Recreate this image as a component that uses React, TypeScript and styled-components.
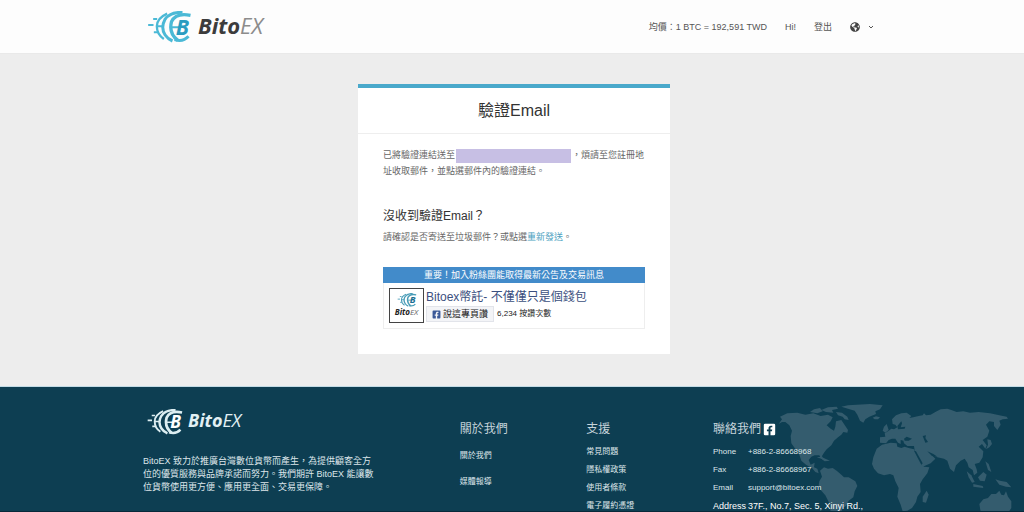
import React from "react";
import styled, { createGlobalStyle } from "styled-components";
import { FaFacebookSquare, FaGlobeAmericas } from "react-icons/fa";

const GlobalStyle = createGlobalStyle`
  *, *::before, *::after { box-sizing: border-box; }
  body {
    margin: 0;
    background: #ededed;
    font-family: "Liberation Sans", "Noto Sans CJK TC", sans-serif;
    font-size: 9px;
    line-height: 16px;
    color: #666;
  }
  h1, h2, h3, p, ul, dl, dd { margin: 0; padding: 0; font-weight: 400; }
  ul { list-style: none; }
  a { color: inherit; text-decoration: none; }
  button { font-family: inherit; cursor: pointer; }
`;

const Page = styled.div`
  display: flex;
  flex-direction: column;
  height: 100vh;
`;

const Container = styled.div`
  width: 100%;
  max-width: 760px;
  margin: 0 auto;
  padding: 0 18px 0 15px;
`;

const Header = styled.header`
  background: #fdfdfd;
  border-bottom: 1px solid #e9e9e9;
`;

const HeaderRow = styled(Container)`
  display: flex;
  align-items: center;
  justify-content: space-between;
  height: 53px;
`;

const Nav = styled.nav`
  display: flex;
  align-items: center;
  gap: 18px;
  color: #555;
`;

const LanguageButton = styled.button`
  display: flex;
  align-items: center;
  gap: 8px;
  padding: 0;
  border: 0;
  background: none;
  color: #444;
`;

const Brand = styled.a<{ $small?: boolean }>`
  display: flex;
  align-items: center;
  gap: ${(p) => (p.$small ? 5 : 6)}px;
  font-family: "Open Sans", sans-serif;
  font-style: italic;
  font-size: ${(p) => (p.$small ? 18 : 22)}px;
  line-height: 30px;
`;

const BrandName = styled.span`
  padding-bottom: 4px;
`;

const BrandBold = styled.span<{ $color: string }>`
  font-weight: 700;
  color: ${(p) => p.$color};
`;

const BrandLight = styled.span<{ $color: string }>`
  font-weight: 400;
  color: ${(p) => p.$color};
`;

const Main = styled.main`
  flex: none;
  padding: 30px 8px 32px 12px;
`;

const Card = styled.section`
  width: 100%;
  max-width: 312px;
  margin: 0 auto;
  background: #fff;
  border-top: 4px solid #4aa9cb;
`;

const CardTitle = styled.h1`
  padding: 12px 0;
  border-bottom: 1px solid #eee;
  font-size: 16px;
  line-height: 21px;
  text-align: center;
  color: #333;
`;

const CardBody = styled.div`
  padding: 13px 25px 25px;
`;

const Redacted = styled.span`
  display: inline-block;
  width: 115px;
  height: 14px;
  margin: 0 1px;
  vertical-align: middle;
  background: #c7bfe4;
`;

const SubTitle = styled.h2`
  margin-top: 29px;
  font-size: 12px;
  line-height: 16px;
  color: #333;
`;

const Hint = styled.p`
  margin-top: 5px;
`;

const ResendLink = styled.a`
  color: #4a9fc0;
`;

const FanBox = styled.aside`
  margin-top: 22px;
`;

const FanBanner = styled.p`
  background: #428bca;
  color: #fff;
  text-align: center;
`;

const FanContent = styled.div`
  display: flex;
  gap: 2px;
  padding: 5px;
  border: 1px solid #eee;
  border-top: 0;
`;

const FanLogo = styled.div`
  display: flex;
  flex-direction: column;
  align-items: center;
  width: 35px;
  height: 35px;
  padding-top: 4px;
  border: 1px solid #444;
  font-family: "Open Sans", sans-serif;
  font-style: italic;
  font-size: 8px;
  line-height: 10px;
`;

const FanName = styled.a`
  display: block;
  font-size: 12px;
  line-height: 18px;
  color: #3b5080;
`;

const LikeRow = styled.div`
  display: flex;
  align-items: center;
  gap: 3px;
  font-size: 8px;
  color: #222;
`;

const LikeButton = styled.button`
  display: flex;
  align-items: center;
  gap: 2px;
  height: 16px;
  padding: 0 5px;
  border: 1px solid #e2e4ea;
  background: #f3f4f7;
  color: #222;
  font-size: 9px;
  line-height: 14px;
`;

const Footer = styled.footer`
  position: relative;
  flex: 1;
  min-height: 0;
  overflow: hidden;
  border-top: 1px solid #c3dbe5;
  border-bottom: 1px solid #08293a;
  background: #0d3e52;
  color: #dde6ea;
`;

const MapArt = styled.svg`
  position: absolute;
  top: 0;
  right: 0;
  width: 324px;
  height: 125px;
`;

const FooterGrid = styled(Container)`
  position: relative;
  display: grid;
  grid-template-columns: 5fr 2fr 2fr 3fr;
  padding: 0;
`;

const About = styled.div`
  min-width: 0;
  padding: 18px 0 0 11px;
`;

const FooterBrand = styled(Brand)`
  padding-left: 4px;
`;

const AboutText = styled.p`
  margin-top: 16px;
  line-height: 13px;
  white-space: nowrap;
`;

const Column = styled.div`
  min-width: 0;
  padding: 33px 0 0 11px;
`;

const ColumnTitle = styled.h3`
  display: flex;
  align-items: center;
  gap: 2px;
  margin-bottom: 5px;
  font-size: 12px;
  line-height: 18px;
  color: #c5d3da;
`;

const SocialLink = styled.a`
  display: flex;
  color: #fff;
`;

const LinkList = styled.ul<{ $row: number }>`
  font-size: 8px;
  line-height: ${(p) => p.$row}px;
`;

const ContactList = styled.dl`
  display: grid;
  grid-template-columns: 35px 1fr;
  font-size: 8px;
  line-height: 18px;
  white-space: nowrap;
`;

const AddressTerm = styled.dt`
  font-size: 9px;
  color: #fff;
`;

const AddressValue = styled.dd`
  font-size: 9px;
  color: #fff;
`;

function LogoMark({ width, height, color, accent }: { width: number; height: number; color: string; accent: string }) {
  return (
    <svg width={width} height={height} viewBox="8 14 130 96" aria-hidden="true">
      <g fill="none" stroke={color}>
        <path d="M9 56H25M24 38H36M26 78H38" strokeWidth="6" />
        <path d="M66 22Q35 36 35 60Q35 84 56 98" strokeWidth="7" />
        <path d="M112 18Q74 17 59 40Q46 64 60 86Q68 98 82 104" strokeWidth="9" />
        <path d="M136 27Q92 18 79 46Q70 82 98 102" strokeWidth="10" />
        <path d="M88 100Q114 108 130 90" strokeWidth="9" />
        <path d="M36 60H54M80 63H104" strokeWidth="6" />
      </g>
      <text x="92" y="86" fontFamily="Open Sans, sans-serif" fontSize="64" fontWeight="700" fontStyle="italic" fill={accent}>
        B
      </text>
    </svg>
  );
}

const LAND = [
  "236,132 246,118 240,110 262,100 292,98 316,104 340,100 362,108 384,104 398,112 392,124 380,136 392,146 402,152 406,140 408,124 424,120 432,132 444,150 442,158 430,156 424,164 414,172 402,182 394,196 380,208 372,218 366,228 370,240 362,234 358,226 344,226 334,230 326,240 332,254 344,248 342,262 352,266 356,280 346,276 336,264 318,254 304,242 298,224 290,212 284,204 274,190 272,168 276,152 268,136 256,126 246,126",
  "330,96 342,88 360,84 368,94 352,100",
  "364,90 384,82 410,80 414,86 396,90 400,98 378,96",
  "408,96 426,98 442,110 446,120 434,118 428,110 414,106",
  "424,80 444,76 470,74 510,72 548,76 540,88 526,94 528,102 508,110 496,118 490,128 480,122 472,104 464,92 444,86",
  "518,113 528,109 540,112 534,118 524,118",
  "350,232 364,230 376,236 390,242 374,244 364,236",
  "360,272 372,262 384,266 398,264 410,272 424,284 432,292 446,292 466,304 472,318 464,334 460,352 446,362 438,378 428,384 424,396 392,396 388,370 376,346 362,330 356,316 358,304 366,290",
  "530,206 546,194 572,188 590,190 592,200 604,204 614,200 626,204 642,208 652,230 664,252 672,260 688,262 682,280 668,298 660,312 662,336 652,350 648,366 636,384 622,392 608,394 602,374 592,350 596,324 586,304 580,286 570,282 552,286 534,280 522,266 516,252 520,232",
  "680,332 686,344 678,368 668,366 668,350",
  "540,188 540,172 556,170 554,160 566,152 574,146 582,148 592,142 586,134 578,132 576,118 588,106 604,100 620,98 634,108 628,114 640,112 656,108 668,106 672,100 678,106 692,104 706,96 722,88 742,86 754,90 770,96 790,94 810,98 836,96 870,100 898,106 920,110 924,116 908,118 898,122 902,134 892,150 882,138 882,126 868,124 858,134 868,152 862,170 848,180 860,196 856,206 846,192 836,200 850,214 848,232 838,248 824,252 830,268 832,278 822,286 818,270 806,262 802,248 794,236 782,242 768,256 762,276 750,266 742,242 732,236 712,232 694,224 706,236 692,250 668,260 656,240 644,212 642,198 622,198 612,190 610,182 602,180 602,192 594,188 586,176 576,176 566,180 558,190",
  "552,140 560,132 566,150 556,158 548,152",
  "862,178 872,180 876,192 868,202 858,208 864,194",
  "856,244 866,252 874,276 864,270",
  "800,274 814,286 824,306 816,308 806,292",
  "834,292 850,276 860,284 854,304 840,302",
  "820,312 848,318 850,324 820,320",
  "886,298 900,302 920,306 934,322 918,320 898,314",
  "838,372 850,358 864,354 874,342 888,342 898,332 904,344 912,346 918,334 924,350 934,364 934,384 926,396 842,396",
];

function WorldMap() {
  return (
    <MapArt viewBox="0 21 972 375" aria-hidden="true">
      <g fill="#345c6e">
        {LAND.map((points) => (
          <polygon key={points} points={points} />
        ))}
      </g>
      <g fill="#0d3e52">
        <polygon points="612,176 620,170 636,176 626,182 614,182" />
        <polygon points="668,168 678,166 676,174 684,186 676,188" />
        <polygon points="642,212 648,214 668,250 664,254" />
        <polygon points="592,138 604,124 606,130 602,142 616,140 614,146 594,148" />
        <polygon points="682,214 700,222 712,230 696,228" />
      </g>
    </MapArt>
  );
}

const supportLinks = ["常見問題", "隱私權政策", "使用者條款", "電子履約憑證"];
const aboutLinks = ["關於我們", "媒體報導"];

function FooterLinks({ title, links, row }: { title: string; links: string[]; row: number }) {
  return (
    <Column>
      <ColumnTitle>{title}</ColumnTitle>
      <LinkList $row={row}>
        {links.map((label) => (
          <li key={label}>
            <a href="#">{label}</a>
          </li>
        ))}
      </LinkList>
    </Column>
  );
}

export default function App() {
  return (
    <Page>
      <GlobalStyle />
      <Header>
        <HeaderRow>
          <Brand href="#" aria-label="BitoEX">
            <LogoMark width={45} height={32} color="#4bb9d6" accent="#2a9cc0" />
            <BrandName>
              <BrandBold $color="#3c3c3c">Bito</BrandBold>
              <BrandLight $color="#8c8c8c">EX</BrandLight>
            </BrandName>
          </Brand>
          <Nav>
            <span>均價：1 BTC = 192,591 TWD</span>
            <span>Hi!</span>
            <a href="#">登出</a>
            <LanguageButton aria-label="Language">
              <FaGlobeAmericas size={10} />
              <svg width="6" height="4" viewBox="0 0 6 4" aria-hidden="true">
                <path d="M1 1L3 3L5 1" fill="none" stroke="#555" />
              </svg>
            </LanguageButton>
          </Nav>
        </HeaderRow>
      </Header>

      <Main>
        <Card>
          <CardTitle>驗證Email</CardTitle>
          <CardBody>
            <p>
              已將驗證連結送至
              <Redacted />
              ，煩請至您註冊地
              <wbr />
              址收取郵件，並點選郵件內的驗證連結。
            </p>
            <SubTitle>沒收到驗證Email？</SubTitle>
            <Hint>
              請確認是否寄送至垃圾郵件？或點選<ResendLink href="#">重新發送</ResendLink>。
            </Hint>
            <FanBox>
              <FanBanner>重要！加入粉絲團能取得最新公告及交易訊息</FanBanner>
              <FanContent>
                <FanLogo>
                  <LogoMark width={22} height={14} color="#4a9db8" accent="#1b6f92" />
                  <span>
                    <BrandBold $color="#222">Bito</BrandBold>
                    <BrandLight $color="#666">EX</BrandLight>
                  </span>
                </FanLogo>
                <div>
                  <FanName href="#">Bitoex幣託- 不僅僅只是個錢包</FanName>
                  <LikeRow>
                    <LikeButton>
                      <FaFacebookSquare size={9} color="#3b5998" />
                      說這專頁讚
                    </LikeButton>
                    <span>6,234 按讚次數</span>
                  </LikeRow>
                </div>
              </FanContent>
            </FanBox>
          </CardBody>
        </Card>
      </Main>

      <Footer>
        <WorldMap />
        <FooterGrid>
          <About>
            <FooterBrand href="#" $small aria-label="BitoEX">
              <LogoMark width={36} height={26} color="#dceef2" accent="#fff" />
              <BrandName>
                <BrandBold $color="#e2f0f4">Bito</BrandBold>
                <BrandLight $color="#e2f0f4">EX</BrandLight>
              </BrandName>
            </FooterBrand>
            <AboutText>
              BitoEX 致力於推廣台灣數位貨幣而產生，為提供顧客全方
              <br />
              位的優質服務與品牌承諾而努力。我們期許 BitoEX 能讓數
              <br />
              位貨幣使用更方便、應用更全面、交易更保障。
            </AboutText>
          </About>
          <FooterLinks title="關於我們" links={aboutLinks} row={26} />
          <FooterLinks title="支援" links={supportLinks} row={18} />
          <Column>
            <ColumnTitle>
              聯絡我們
              <SocialLink href="#" aria-label="Facebook">
                <FaFacebookSquare size={13} />
              </SocialLink>
            </ColumnTitle>
            <ContactList>
              <dt>Phone</dt>
              <dd>+886-2-86668968</dd>
              <dt>Fax</dt>
              <dd>+886-2-86668967</dd>
              <dt>Email</dt>
              <dd>
                <a href="#">support@bitoex.com</a>
              </dd>
              <AddressTerm>Address</AddressTerm>
              <AddressValue>37F., No.7, Sec. 5, Xinyi Rd.,</AddressValue>
            </ContactList>
          </Column>
        </FooterGrid>
      </Footer>
    </Page>
  );
}
